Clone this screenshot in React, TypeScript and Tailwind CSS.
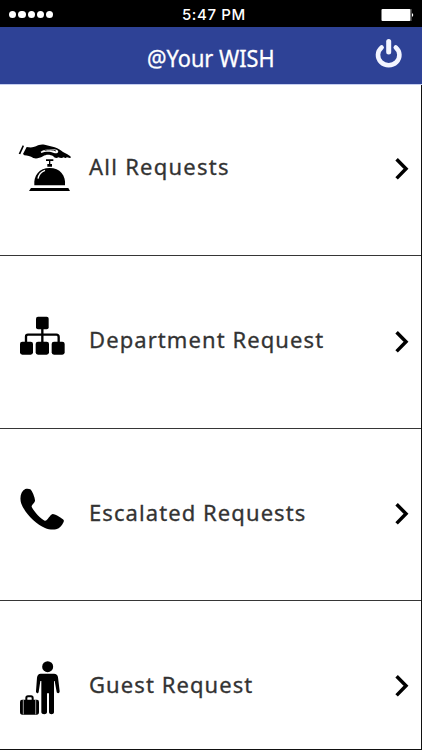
import type { ReactNode } from "react";

type RequestRowProps = {
  label: string;
  icon: ReactNode;
  className: string;
  labelClassName: string;
};

function RequestRow({ label, icon, className, labelClassName }: RequestRowProps) {
  return (
    <li className={`flex items-start border-[#363636] pl-[10px] pr-[11px] ${className}`}>
      <svg viewBox="0 0 210 210" className="h-[70px] w-[70px] shrink-0 text-black" fill="currentColor">
        {icon}
      </svg>
      <span className={`ml-[9px] whitespace-nowrap text-[22px] leading-[30px] text-[#333] [-webkit-text-stroke:0.3px_#333] ${labelClassName}`}>
        {label}
      </span>
      <svg viewBox="0 0 16 24" className="ml-auto mt-[22px] h-6 w-4 shrink-0" fill="none" stroke="#000" strokeWidth="3.5">
        <path d="M2.6 2.2 12 11.8 2.6 21.4" />
      </svg>
    </li>
  );
}

const bellIcon = (
  <>
    <path d="M38 31 42 33 31 58 26 56Z" />
    <path d="M50 36 C60 38 70 38 78 34 C86 29 94 27 104 29 L134 37 C145 41 153 47 159 51 L172 58 C178 62 184 64 182 68 C179 70 173 67 168 65 C173 69 166 71 161 67 C156 71 150 69 145 67 C140 71 133 69 130 64 C120 58 108 58 99 64 C88 70 78 72 70 69 C61 64 52 62 43 61 L39 57Z" />
    <path d="M92 50 C104 43 121 40 140 44 C150 49 143 58 132 54 C119 48 104 50 94 54Z" fill="#fff" />
    <path d="M104 46 C116 43 129 44 138 48" fill="none" stroke="#000" strokeWidth="2.5" />
    <path d="M108 73H130V78H121V87H126V95H112V87H117V78H108Z" />
    <path d="M73 151 C70 121 88 99 119 99 C150 99 168 121 165 151Z" />
    <path d="M84 131 C86 119 94 110 105 106" fill="none" stroke="#fff" strokeWidth="4" />
    <path d="M63 159H175L180 168H57Z" />
  </>
);

const departmentIcon = (
  <>
    <rect x="78" y="26" width="38" height="38" rx="6" />
    <path d="M97 60V105M48 106V86Q48 80 54 80H139Q146 80 146 87V106" fill="none" stroke="#000" strokeWidth="7" />
    <rect x="30" y="101" width="39" height="39" rx="7" />
    <rect x="77" y="101" width="40" height="39" rx="7" />
    <rect x="125" y="101" width="39" height="39" rx="7" />
  </>
);

const phoneIcon = (
  <path d="M46 27 C51 26 57 26 61 28 C66 31 76 55 75 63 C74 68 67 73 65 78 C63 84 90 116 104 122 C112 125 119 104 128 102 C137 102 157 116 161 120 C164 126 154 139 146 145 C137 150 119 150 105 144 C78 133 45 100 34 71 C28 54 32 34 46 27Z" />
);

const guestIcon = (
  <>
    <circle cx="113" cy="44" r="16.5" />
    <path d="M92 65H132C139 65 143 69 144 76L149 118C149 125 141 125 140 120L134 87H132V181C132 189 117 189 117 181V124H111V181C111 189 94 189 94 181V87H91L86 120C84 127 77 123 78 117L81 77C82 69 86 65 92 65Z" />
    <path d="M49 145V138Q49 133 54 133H63Q68 133 68 138V145" fill="none" stroke="#000" strokeWidth="6" />
    <path d="M36 143H81Q87 143 87 150V180Q87 188 80 188H37Q30 188 30 180V150Q30 143 36 143Z" />
    <path d="M40 144V187M77 144V187" stroke="#bbb" strokeWidth="2.5" />
  </>
);

function StatusBar() {
  return (
    <div className="flex h-[27px] items-center bg-black pl-[9px] pr-[8px] text-white">
      <div className="mt-[1px] flex w-[173px] gap-[2px]">
        {[0, 1, 2, 3, 4].map((dot) => (
          <span key={dot} className="h-[7px] w-[7.3px] rounded-full bg-white" />
        ))}
      </div>
      <span className="mt-[2px] font-['Inter',sans-serif] text-[15px] font-medium leading-5 tracking-[0.6px]">
        5:47 PM
      </span>
      <svg viewBox="0 0 34 14" className="ml-auto mt-[2px] h-[14px] w-[34px]">
        <rect x="1.5" y="1" width="29" height="12" rx="1" fill="#fff" />
        <path d="M31 1V13" stroke="#777" />
        <path d="M32 5Q34.5 7 32 9Z" fill="#fff" />
      </svg>
    </div>
  );
}

function Header() {
  return (
    <header className="flex h-[58px] items-start border-b border-[#c5cef0] bg-[#2e4296] pl-[147px] pr-[17px]">
      <h1 className="mt-[16px] origin-left scale-x-[0.945] whitespace-nowrap text-[23px] leading-[30px] text-white [-webkit-text-stroke:0.3px_white]">
        @Your WISH
      </h1>
      <svg
        viewBox="0 0 32 34"
        className="ml-auto mt-[10px] h-[34px] w-8 shrink-0"
        fill="none"
        stroke="#f3f5ff"
        strokeLinecap="round"
      >
        <path d="M8.6 10.4A10.7 10.2 0 1 0 22.8 10.4" strokeWidth="4.6" />
        <path d="M15.7 4.5V15" strokeWidth="5" />
      </svg>
    </header>
  );
}

export default function App() {
  return (
    <div className="h-[750px] w-[422px] overflow-hidden bg-white font-['Noto_Sans',sans-serif]">
      <StatusBar />
      <Header />
      <ul className="h-[665px] border-b border-r border-[#111]">
        <RequestRow label="All Requests" icon={bellIcon} className="h-[171px] border-b pt-[50px]" labelClassName="mt-[16px] tracking-[1.25px]" />
        <RequestRow label="Department Request" icon={departmentIcon} className="h-[173px] border-b pt-[52px]" labelClassName="mt-[16px] tracking-[1.08px]" />
        <RequestRow label="Escalated Requests" icon={phoneIcon} className="h-[172px] border-b pt-[51px]" labelClassName="mt-[17px] tracking-[1.08px]" />
        <RequestRow label="Guest Request" icon={guestIcon} className="h-[148px] pt-[51px]" labelClassName="mt-[17px] tracking-[1.08px]" />
      </ul>
    </div>
  );
}
